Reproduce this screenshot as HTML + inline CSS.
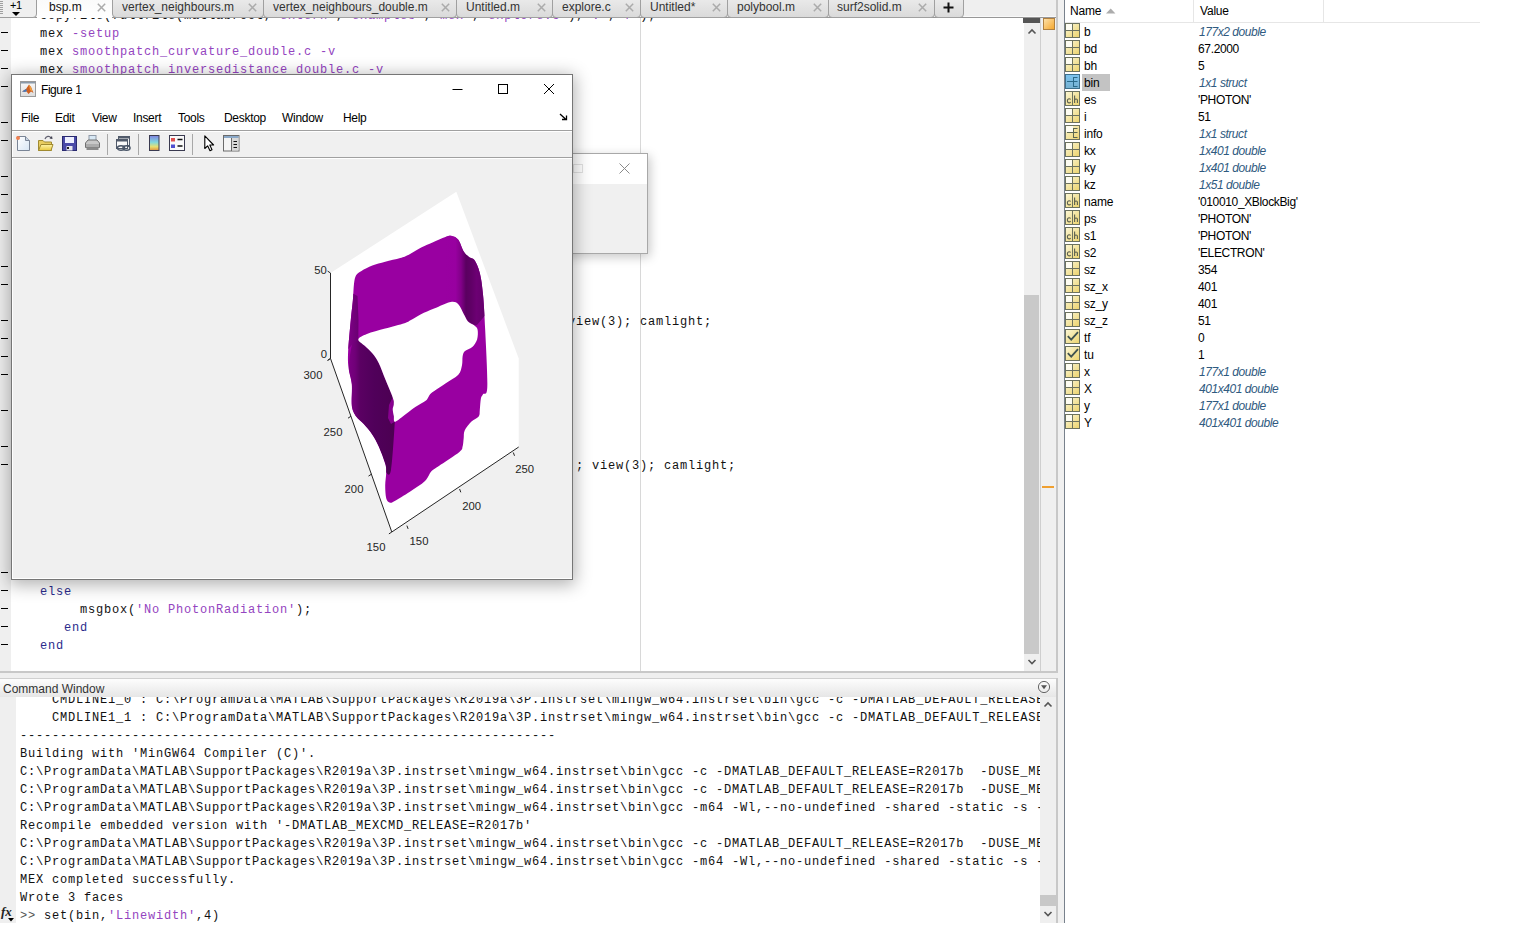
<!DOCTYPE html><html><head><meta charset="utf-8"><style>

*{margin:0;padding:0;box-sizing:border-box}
html,body{width:1522px;height:930px;overflow:hidden;background:#fff;font-family:"Liberation Sans",sans-serif;font-size:12px;color:#000}
.a{position:absolute}
.m{position:absolute;font-family:"Liberation Mono",monospace;font-size:12px;letter-spacing:0.8px;white-space:pre;line-height:18px;height:18px;color:#111}
.s{color:#9444c0}
.k{color:#2b2b8c}
.u{position:absolute;font-family:"Liberation Sans",sans-serif;font-size:12px;white-space:pre;line-height:17px}
.dash{position:absolute;left:1px;width:7px;height:1px;background:#000}

</style></head><body>
<div class="a" style="left:0;top:17px;width:1058px;height:656px;background:#fff;overflow:hidden">
<div class="a" style="left:0;top:0;width:11px;height:654px;background:#efefef"></div>
<div class="a" style="left:640px;top:0;width:1px;height:654px;background:#d8d8d8"></div>
<div class="dash" style="top:15px"></div>
<div class="dash" style="top:33px"></div>
<div class="dash" style="top:51px"></div>
<div class="dash" style="top:69px"></div>
<div class="dash" style="top:105px"></div>
<div class="dash" style="top:123px"></div>
<div class="dash" style="top:159px"></div>
<div class="dash" style="top:177px"></div>
<div class="dash" style="top:195px"></div>
<div class="dash" style="top:213px"></div>
<div class="dash" style="top:249px"></div>
<div class="dash" style="top:267px"></div>
<div class="dash" style="top:303px"></div>
<div class="dash" style="top:321px"></div>
<div class="dash" style="top:339px"></div>
<div class="dash" style="top:357px"></div>
<div class="dash" style="top:393px"></div>
<div class="dash" style="top:429px"></div>
<div class="dash" style="top:447px"></div>
<div class="dash" style="top:555px"></div>
<div class="dash" style="top:573px"></div>
<div class="dash" style="top:591px"></div>
<div class="dash" style="top:609px"></div>
<div class="dash" style="top:627px"></div>
<div class="m" style="left:40px;top:-10px">copyfile(fullfile(matlabroot,<span class=s>'extern'</span>,<span class=s>'examples'</span>,<span class=s>'mex'</span>,<span class=s>'explore.c'</span>),<span class=s>'.'</span>,<span class=s>'f'</span>);</div>
<div class="m" style="left:40px;top:8px">mex <span class=s>-setup</span></div>
<div class="m" style="left:40px;top:26px">mex <span class=s>smoothpatch_curvature_double.c -v</span></div>
<div class="m" style="left:40px;top:44px">mex <span class=s>smoothpatch_inversedistance_double.c -v</span></div>
<div class="m" style="left:568px;top:296px">view(3); camlight;</div>
<div class="m" style="left:576px;top:440px">; view(3); camlight;</div>
<div class="m" style="left:40px;top:566px"><span class=k>else</span></div>
<div class="m" style="left:80px;top:584px">msgbox(<span class=s>'No PhotonRadiation'</span>);</div>
<div class="m" style="left:64px;top:602px"><span class=k>end</span></div>
<div class="m" style="left:40px;top:620px"><span class=k>end</span></div>
<div class="a" style="left:1024px;top:0;width:16px;height:654px;background:#efefef"></div>
<div class="a" style="left:1023px;top:1px;width:17px;height:5px;background:#555"></div>
<div class="a" style="left:1024px;top:278px;width:15px;height:359px;background:#c9c9c9"></div>
<svg class="a" style="left:1024px;top:7px" width="16" height="14"><path d="M4.5 9.5 L8 6 L11.5 9.5" fill="none" stroke="#555" stroke-width="1.6"/></svg>
<svg class="a" style="left:1024px;top:637px" width="16" height="17"><path d="M4.5 6 L8 9.5 L11.5 6" fill="none" stroke="#555" stroke-width="1.6"/></svg>
<div class="a" style="left:1040px;top:0;width:1px;height:654px;background:#cfcfcf"></div>
<div class="a" style="left:1041px;top:0;width:15px;height:654px;background:#f0f0f0"></div>
<div class="a" style="left:1043px;top:1px;width:12px;height:12px;background:linear-gradient(135deg,#fde0a8,#f5a830);border:1px solid #b08040"></div>
<div class="a" style="left:1042px;top:469px;width:12px;height:2px;background:#f0a030"></div>
<div class="a" style="left:1056px;top:0;width:2px;height:656px;background:#c8c8c8"></div>
<div class="a" style="left:0;top:654px;width:1057px;height:2px;background:#c8c8c8"></div>
</div>
<div class="a" style="left:0;top:0;width:1058px;height:18px;background:#efefef;overflow:hidden">
<div class="a" style="left:0;top:16px;width:1057px;height:1px;background:#f8f8f8"></div>
<div class="a" style="left:0;top:17px;width:1057px;height:1px;background:#979797"></div>
<div class="a" style="left:-4px;top:-4px;width:41px;height:22px;background:#efefef;border:1px solid #9d9d9d;border-radius:0 0 4px 0"></div>
<div class="a" style="left:0;top:1px;width:3px;height:1px;background:#a0a0a0"></div>
<div class="a" style="left:0;top:3px;width:3px;height:1px;background:#a0a0a0"></div>
<div class="a" style="left:0;top:5px;width:3px;height:1px;background:#a0a0a0"></div>
<div class="a" style="left:0;top:7px;width:3px;height:1px;background:#a0a0a0"></div>
<div class="a" style="left:0;top:9px;width:3px;height:1px;background:#a0a0a0"></div>
<div class="a" style="left:0;top:11px;width:3px;height:1px;background:#a0a0a0"></div>
<div class="a" style="left:0;top:13px;width:3px;height:1px;background:#a0a0a0"></div>
<div class="a" style="left:10px;top:0px;font-size:11px;line-height:11px;font-family:'Liberation Sans';color:#000;letter-spacing:-0.5px">+1</div>
<svg class="a" style="left:11px;top:11px" width="10" height="6"><path d="M1 1 L9 1 L5 5 Z" fill="#000"/></svg>
<div class="a" style="left:37px;top:-1px;width:75px;height:19px;background:linear-gradient(#fafafa,#fff)"></div>
<div class="u" style="left:49px;top:-1px;color:#111;font-size:12px">bsp.m</div>
<svg class="a" style="left:96.5px;top:3px" width="9" height="9"><path d="M0.8 0.8 L8.2 8.2 M8.2 0.8 L0.8 8.2" stroke="#ababab" stroke-width="1.5"/></svg>
<div class="a" style="left:112px;top:-4px;width:152px;height:22px;background:linear-gradient(#ececec,#dadada);border:1px solid #a0a0a0;border-radius:0 0 4px 4px"></div>
<div class="u" style="left:122px;top:-1px;color:#333;font-size:12px">vertex_neighbours.m</div>
<svg class="a" style="left:247.5px;top:3px" width="9" height="9"><path d="M0.8 0.8 L8.2 8.2 M8.2 0.8 L0.8 8.2" stroke="#ababab" stroke-width="1.5"/></svg>
<div class="a" style="left:263px;top:-4px;width:194px;height:22px;background:linear-gradient(#ececec,#dadada);border:1px solid #a0a0a0;border-radius:0 0 4px 4px"></div>
<div class="u" style="left:273px;top:-1px;color:#333;font-size:12px">vertex_neighbours_double.m</div>
<svg class="a" style="left:441px;top:3px" width="9" height="9"><path d="M0.8 0.8 L8.2 8.2 M8.2 0.8 L0.8 8.2" stroke="#ababab" stroke-width="1.5"/></svg>
<div class="a" style="left:456px;top:-4px;width:97px;height:22px;background:linear-gradient(#ececec,#dadada);border:1px solid #a0a0a0;border-radius:0 0 4px 4px"></div>
<div class="u" style="left:466px;top:-1px;color:#333;font-size:12px">Untitled.m</div>
<svg class="a" style="left:537px;top:3px" width="9" height="9"><path d="M0.8 0.8 L8.2 8.2 M8.2 0.8 L0.8 8.2" stroke="#ababab" stroke-width="1.5"/></svg>
<div class="a" style="left:552px;top:-4px;width:89px;height:22px;background:linear-gradient(#ececec,#dadada);border:1px solid #a0a0a0;border-radius:0 0 4px 4px"></div>
<div class="u" style="left:562px;top:-1px;color:#333;font-size:12px">explore.c</div>
<svg class="a" style="left:625px;top:3px" width="9" height="9"><path d="M0.8 0.8 L8.2 8.2 M8.2 0.8 L0.8 8.2" stroke="#ababab" stroke-width="1.5"/></svg>
<div class="a" style="left:640px;top:-4px;width:88px;height:22px;background:linear-gradient(#ececec,#dadada);border:1px solid #a0a0a0;border-radius:0 0 4px 4px"></div>
<div class="u" style="left:650px;top:-1px;color:#333;font-size:12px">Untitled*</div>
<svg class="a" style="left:711.5px;top:3px" width="9" height="9"><path d="M0.8 0.8 L8.2 8.2 M8.2 0.8 L0.8 8.2" stroke="#ababab" stroke-width="1.5"/></svg>
<div class="a" style="left:727px;top:-4px;width:102px;height:22px;background:linear-gradient(#ececec,#dadada);border:1px solid #a0a0a0;border-radius:0 0 4px 4px"></div>
<div class="u" style="left:737px;top:-1px;color:#333;font-size:12px">polybool.m</div>
<svg class="a" style="left:812.5px;top:3px" width="9" height="9"><path d="M0.8 0.8 L8.2 8.2 M8.2 0.8 L0.8 8.2" stroke="#ababab" stroke-width="1.5"/></svg>
<div class="a" style="left:828px;top:-4px;width:107px;height:22px;background:linear-gradient(#ececec,#dadada);border:1px solid #a0a0a0;border-radius:0 0 4px 4px"></div>
<div class="u" style="left:837px;top:-1px;color:#333;font-size:12px">surf2solid.m</div>
<svg class="a" style="left:917.5px;top:3px" width="9" height="9"><path d="M0.8 0.8 L8.2 8.2 M8.2 0.8 L0.8 8.2" stroke="#ababab" stroke-width="1.5"/></svg>
<div class="a" style="left:934px;top:-4px;width:30px;height:22px;background:linear-gradient(#ececec,#dadada);border:1px solid #a0a0a0;border-radius:0 0 4px 4px"></div>
<svg class="a" style="left:943px;top:2px" width="11" height="11"><path d="M5.5 0.5 V10.5 M0.5 5.5 H10.5" stroke="#111" stroke-width="2"/></svg>
<div class="a" style="left:1056px;top:0;width:2px;height:18px;background:#c8c8c8"></div>
</div>
<div class="a" style="left:0;top:673px;width:1058px;height:5px;background:#efefef"></div>
<div class="a" style="left:0;top:678px;width:1058px;height:245px;background:#fff;overflow:hidden">
<div class="a" style="left:0;top:0;width:1057px;height:1px;background:#d0d0d0"></div>
<div class="a" style="left:0;top:19px;width:16px;height:226px;background:#efefef"></div>
<div class="m" style="left:52px;top:13px">CMDLINE1_0 : C:\ProgramData\MATLAB\SupportPackages\R2019a\3P.instrset\mingw_w64.instrset\bin\gcc -c -DMATLAB_DEFAULT_RELEASE=R2017b  -DUSE_MEX_CMD</div>
<div class="m" style="left:52px;top:31px">CMDLINE1_1 : C:\ProgramData\MATLAB\SupportPackages\R2019a\3P.instrset\mingw_w64.instrset\bin\gcc -c -DMATLAB_DEFAULT_RELEASE=R2017b  -DUSE_MEX_CMD</div>
<div class="m" style="left:20px;top:49px">-------------------------------------------------------------------</div>
<div class="m" style="left:20px;top:67px">Building with 'MinGW64 Compiler (C)'.</div>
<div class="m" style="left:20px;top:85px">C:\ProgramData\MATLAB\SupportPackages\R2019a\3P.instrset\mingw_w64.instrset\bin\gcc -c -DMATLAB_DEFAULT_RELEASE=R2017b  -DUSE_MEX_CMD</div>
<div class="m" style="left:20px;top:103px">C:\ProgramData\MATLAB\SupportPackages\R2019a\3P.instrset\mingw_w64.instrset\bin\gcc -c -DMATLAB_DEFAULT_RELEASE=R2017b  -DUSE_MEX_CMD</div>
<div class="m" style="left:20px;top:121px">C:\ProgramData\MATLAB\SupportPackages\R2019a\3P.instrset\mingw_w64.instrset\bin\gcc -m64 -Wl,--no-undefined -shared -static -s -Wl</div>
<div class="m" style="left:20px;top:139px">Recompile embedded version with '-DMATLAB_MEXCMD_RELEASE=R2017b'</div>
<div class="m" style="left:20px;top:157px">C:\ProgramData\MATLAB\SupportPackages\R2019a\3P.instrset\mingw_w64.instrset\bin\gcc -c -DMATLAB_DEFAULT_RELEASE=R2017b  -DUSE_MEX_CMD</div>
<div class="m" style="left:20px;top:175px">C:\ProgramData\MATLAB\SupportPackages\R2019a\3P.instrset\mingw_w64.instrset\bin\gcc -m64 -Wl,--no-undefined -shared -static -s -Wl</div>
<div class="m" style="left:20px;top:193px">MEX completed successfully.</div>
<div class="m" style="left:20px;top:211px">Wrote 3 faces</div>
<div class="m" style="left:20px;top:229px"><span style='color:#555'>&gt;&gt;</span> set(bin,<span class=s>'Linewidth'</span>,4)</div>
<div class="a" style="left:0;top:1px;width:1057px;height:18px;background:linear-gradient(#fdfdfd,#e6e6e6)"></div>
<div class="u" style="left:3px;top:2.5px;color:#333;font-size:12px">Command Window</div>
<svg class="a" style="left:1037px;top:2px" width="14" height="14"><circle cx="7" cy="7" r="5.6" fill="none" stroke="#666" stroke-width="1"/><path d="M4 5.2 H10 L7 9.2 Z" fill="#555"/></svg>
<div class="a" style="left:1040px;top:19px;width:16px;height:226px;background:#efefef"></div>
<div class="a" style="left:1040px;top:217px;width:16px;height:11px;background:#c8c8c8"></div>
<svg class="a" style="left:1040px;top:19px" width="16" height="14"><path d="M4.5 9.5 L8 6 L11.5 9.5" fill="none" stroke="#555" stroke-width="1.6"/></svg>
<svg class="a" style="left:1040px;top:228px" width="16" height="17"><path d="M4.5 6 L8 9.5 L11.5 6" fill="none" stroke="#555" stroke-width="1.6"/></svg>
<div class="a" style="left:1056px;top:0;width:2px;height:245px;background:#c8c8c8"></div>
<div class="a" style="left:1px;top:227px;font-family:'Liberation Serif';font-style:italic;font-weight:bold;font-size:13px;line-height:14px;color:#222">fx</div>
<svg class="a" style="left:8px;top:240px" width="6" height="4"><path d="M0 0 H6 L3 3.5 Z" fill="#000"/></svg>
</div>
<div class="a" style="left:1058px;top:0;width:6px;height:923px;background:#f0f0f0"></div>
<div class="a" style="left:1064px;top:0;width:1px;height:923px;background:#78818c"></div>
<div class="a" style="left:1065px;top:0;width:457px;height:923px;background:#fff;overflow:hidden">
<div class="u" style="left:5px;top:3px;color:#000;letter-spacing:-0.2px">Name</div>
<svg class="a" style="left:41px;top:8px" width="10" height="6"><path d="M0 5.5 L4.7 0.5 L9.4 5.5 Z" fill="#acacac"/></svg>
<div class="u" style="left:135px;top:3px;color:#000;letter-spacing:-0.2px">Value</div>
<div class="a" style="left:128px;top:0;width:1px;height:22px;background:#e6e6e6"></div>
<div class="a" style="left:258px;top:0;width:1px;height:22px;background:#e6e6e6"></div>
<div class="a" style="left:0;top:22px;width:415px;height:1px;background:#e6e6e6"></div>
<svg width="0" height="0" style="position:absolute"><defs>
<linearGradient id="gy" x1="0" y1="0" x2="1" y2="1"><stop offset="0" stop-color="#fbf7d8"/><stop offset="1" stop-color="#ecd36c"/></linearGradient>
<linearGradient id="gb" x1="0" y1="0" x2="0" y2="1"><stop offset="0" stop-color="#7ec4f0"/><stop offset="1" stop-color="#74b0d0"/></linearGradient>
</defs></svg>
<svg class="a" style="left:0;top:23px" width="15" height="15"><rect x="0.5" y="0.5" width="14" height="14" fill="url(#gy)" stroke="#6c725f"/><rect x="1" y="1" width="6" height="6" fill="#fdfcf2"/><path d="M7.5 0.5 V14.5 M0.5 7.5 H14.5" stroke="#6c725f"/></svg>
<div class="u" style="left:19px;top:24px;letter-spacing:-0.2px">b</div>
<div class="u" style="left:134px;top:24px;font-style:italic;color:#2f5a80;letter-spacing:-0.45px">177x2 double</div>
<svg class="a" style="left:0;top:40px" width="15" height="15"><rect x="0.5" y="0.5" width="14" height="14" fill="url(#gy)" stroke="#6c725f"/><rect x="1" y="1" width="6" height="6" fill="#fdfcf2"/><path d="M7.5 0.5 V14.5 M0.5 7.5 H14.5" stroke="#6c725f"/></svg>
<div class="u" style="left:19px;top:41px;letter-spacing:-0.2px">bd</div>
<div class="u" style="left:133px;top:41px;letter-spacing:-0.35px">67.2000</div>
<svg class="a" style="left:0;top:57px" width="15" height="15"><rect x="0.5" y="0.5" width="14" height="14" fill="url(#gy)" stroke="#6c725f"/><rect x="1" y="1" width="6" height="6" fill="#fdfcf2"/><path d="M7.5 0.5 V14.5 M0.5 7.5 H14.5" stroke="#6c725f"/></svg>
<div class="u" style="left:19px;top:58px;letter-spacing:-0.2px">bh</div>
<div class="u" style="left:133px;top:58px;letter-spacing:-0.35px">5</div>
<div class="a" style="left:17px;top:74px;width:28px;height:17px;background:#c3c3c3"></div>
<svg class="a" style="left:0;top:74px" width="15" height="15"><rect x="0.5" y="0.5" width="14" height="14" fill="url(#gb)" stroke="#3d6f8c"/><path d="M2 7.5 H8.5 M8.5 3.5 V12.5 M8 3.5 H12.5 M8.5 7.5 H12.5 M8 12.5 H12.5" fill="none" stroke="#2a6a8a" stroke-width="1"/></svg>
<div class="u" style="left:19px;top:75px;letter-spacing:-0.2px">bin</div>
<div class="u" style="left:134px;top:75px;font-style:italic;color:#2f5a80;letter-spacing:-0.45px">1x1 struct</div>
<svg class="a" style="left:0;top:91px" width="15" height="15"><rect x="0.5" y="0.5" width="14" height="14" fill="url(#gy)" stroke="#6c725f"/><path d="M7.5 0.5 V14.5" stroke="#6c725f"/><path d="M5.6 8.6 C5.3 8 4.7 7.7 4.1 7.7 C3.1 7.7 2.4 8.6 2.4 9.8 C2.4 11 3.1 11.9 4.1 11.9 C4.7 11.9 5.3 11.6 5.6 11" fill="none" stroke="#5e6250" stroke-width="1.1"/><path d="M9.6 4.5 V12 M9.6 9 C10 7.8 12.4 7.6 12.4 9.2 V12" fill="none" stroke="#5e6250" stroke-width="1.1"/></svg>
<div class="u" style="left:19px;top:92px;letter-spacing:-0.2px">es</div>
<div class="u" style="left:133px;top:92px;letter-spacing:-0.35px">'PHOTON'</div>
<svg class="a" style="left:0;top:108px" width="15" height="15"><rect x="0.5" y="0.5" width="14" height="14" fill="url(#gy)" stroke="#6c725f"/><rect x="1" y="1" width="6" height="6" fill="#fdfcf2"/><path d="M7.5 0.5 V14.5 M0.5 7.5 H14.5" stroke="#6c725f"/></svg>
<div class="u" style="left:19px;top:109px;letter-spacing:-0.2px">i</div>
<div class="u" style="left:133px;top:109px;letter-spacing:-0.35px">51</div>
<svg class="a" style="left:0;top:125px" width="15" height="15"><rect x="0.5" y="0.5" width="14" height="14" fill="url(#gy)" stroke="#6c725f"/><rect x="1" y="1" width="7" height="6" fill="#fdfcf2"/><path d="M2 7.5 H8.5 M8.5 3.5 V12.5 M8 3.5 H12.5 M8.5 7.5 H12.5 M8 12.5 H12.5" fill="none" stroke="#5a6650" stroke-width="1"/></svg>
<div class="u" style="left:19px;top:126px;letter-spacing:-0.2px">info</div>
<div class="u" style="left:134px;top:126px;font-style:italic;color:#2f5a80;letter-spacing:-0.45px">1x1 struct</div>
<svg class="a" style="left:0;top:142px" width="15" height="15"><rect x="0.5" y="0.5" width="14" height="14" fill="url(#gy)" stroke="#6c725f"/><rect x="1" y="1" width="6" height="6" fill="#fdfcf2"/><path d="M7.5 0.5 V14.5 M0.5 7.5 H14.5" stroke="#6c725f"/></svg>
<div class="u" style="left:19px;top:143px;letter-spacing:-0.2px">kx</div>
<div class="u" style="left:134px;top:143px;font-style:italic;color:#2f5a80;letter-spacing:-0.45px">1x401 double</div>
<svg class="a" style="left:0;top:159px" width="15" height="15"><rect x="0.5" y="0.5" width="14" height="14" fill="url(#gy)" stroke="#6c725f"/><rect x="1" y="1" width="6" height="6" fill="#fdfcf2"/><path d="M7.5 0.5 V14.5 M0.5 7.5 H14.5" stroke="#6c725f"/></svg>
<div class="u" style="left:19px;top:160px;letter-spacing:-0.2px">ky</div>
<div class="u" style="left:134px;top:160px;font-style:italic;color:#2f5a80;letter-spacing:-0.45px">1x401 double</div>
<svg class="a" style="left:0;top:176px" width="15" height="15"><rect x="0.5" y="0.5" width="14" height="14" fill="url(#gy)" stroke="#6c725f"/><rect x="1" y="1" width="6" height="6" fill="#fdfcf2"/><path d="M7.5 0.5 V14.5 M0.5 7.5 H14.5" stroke="#6c725f"/></svg>
<div class="u" style="left:19px;top:177px;letter-spacing:-0.2px">kz</div>
<div class="u" style="left:134px;top:177px;font-style:italic;color:#2f5a80;letter-spacing:-0.45px">1x51 double</div>
<svg class="a" style="left:0;top:193px" width="15" height="15"><rect x="0.5" y="0.5" width="14" height="14" fill="url(#gy)" stroke="#6c725f"/><path d="M7.5 0.5 V14.5" stroke="#6c725f"/><path d="M5.6 8.6 C5.3 8 4.7 7.7 4.1 7.7 C3.1 7.7 2.4 8.6 2.4 9.8 C2.4 11 3.1 11.9 4.1 11.9 C4.7 11.9 5.3 11.6 5.6 11" fill="none" stroke="#5e6250" stroke-width="1.1"/><path d="M9.6 4.5 V12 M9.6 9 C10 7.8 12.4 7.6 12.4 9.2 V12" fill="none" stroke="#5e6250" stroke-width="1.1"/></svg>
<div class="u" style="left:19px;top:194px;letter-spacing:-0.2px">name</div>
<div class="u" style="left:133px;top:194px;letter-spacing:-0.35px">'010010_XBlockBig'</div>
<svg class="a" style="left:0;top:210px" width="15" height="15"><rect x="0.5" y="0.5" width="14" height="14" fill="url(#gy)" stroke="#6c725f"/><path d="M7.5 0.5 V14.5" stroke="#6c725f"/><path d="M5.6 8.6 C5.3 8 4.7 7.7 4.1 7.7 C3.1 7.7 2.4 8.6 2.4 9.8 C2.4 11 3.1 11.9 4.1 11.9 C4.7 11.9 5.3 11.6 5.6 11" fill="none" stroke="#5e6250" stroke-width="1.1"/><path d="M9.6 4.5 V12 M9.6 9 C10 7.8 12.4 7.6 12.4 9.2 V12" fill="none" stroke="#5e6250" stroke-width="1.1"/></svg>
<div class="u" style="left:19px;top:211px;letter-spacing:-0.2px">ps</div>
<div class="u" style="left:133px;top:211px;letter-spacing:-0.35px">'PHOTON'</div>
<svg class="a" style="left:0;top:227px" width="15" height="15"><rect x="0.5" y="0.5" width="14" height="14" fill="url(#gy)" stroke="#6c725f"/><path d="M7.5 0.5 V14.5" stroke="#6c725f"/><path d="M5.6 8.6 C5.3 8 4.7 7.7 4.1 7.7 C3.1 7.7 2.4 8.6 2.4 9.8 C2.4 11 3.1 11.9 4.1 11.9 C4.7 11.9 5.3 11.6 5.6 11" fill="none" stroke="#5e6250" stroke-width="1.1"/><path d="M9.6 4.5 V12 M9.6 9 C10 7.8 12.4 7.6 12.4 9.2 V12" fill="none" stroke="#5e6250" stroke-width="1.1"/></svg>
<div class="u" style="left:19px;top:228px;letter-spacing:-0.2px">s1</div>
<div class="u" style="left:133px;top:228px;letter-spacing:-0.35px">'PHOTON'</div>
<svg class="a" style="left:0;top:244px" width="15" height="15"><rect x="0.5" y="0.5" width="14" height="14" fill="url(#gy)" stroke="#6c725f"/><path d="M7.5 0.5 V14.5" stroke="#6c725f"/><path d="M5.6 8.6 C5.3 8 4.7 7.7 4.1 7.7 C3.1 7.7 2.4 8.6 2.4 9.8 C2.4 11 3.1 11.9 4.1 11.9 C4.7 11.9 5.3 11.6 5.6 11" fill="none" stroke="#5e6250" stroke-width="1.1"/><path d="M9.6 4.5 V12 M9.6 9 C10 7.8 12.4 7.6 12.4 9.2 V12" fill="none" stroke="#5e6250" stroke-width="1.1"/></svg>
<div class="u" style="left:19px;top:245px;letter-spacing:-0.2px">s2</div>
<div class="u" style="left:133px;top:245px;letter-spacing:-0.35px">'ELECTRON'</div>
<svg class="a" style="left:0;top:261px" width="15" height="15"><rect x="0.5" y="0.5" width="14" height="14" fill="url(#gy)" stroke="#6c725f"/><rect x="1" y="1" width="6" height="6" fill="#fdfcf2"/><path d="M7.5 0.5 V14.5 M0.5 7.5 H14.5" stroke="#6c725f"/></svg>
<div class="u" style="left:19px;top:262px;letter-spacing:-0.2px">sz</div>
<div class="u" style="left:133px;top:262px;letter-spacing:-0.35px">354</div>
<svg class="a" style="left:0;top:278px" width="15" height="15"><rect x="0.5" y="0.5" width="14" height="14" fill="url(#gy)" stroke="#6c725f"/><rect x="1" y="1" width="6" height="6" fill="#fdfcf2"/><path d="M7.5 0.5 V14.5 M0.5 7.5 H14.5" stroke="#6c725f"/></svg>
<div class="u" style="left:19px;top:279px;letter-spacing:-0.2px">sz_x</div>
<div class="u" style="left:133px;top:279px;letter-spacing:-0.35px">401</div>
<svg class="a" style="left:0;top:295px" width="15" height="15"><rect x="0.5" y="0.5" width="14" height="14" fill="url(#gy)" stroke="#6c725f"/><rect x="1" y="1" width="6" height="6" fill="#fdfcf2"/><path d="M7.5 0.5 V14.5 M0.5 7.5 H14.5" stroke="#6c725f"/></svg>
<div class="u" style="left:19px;top:296px;letter-spacing:-0.2px">sz_y</div>
<div class="u" style="left:133px;top:296px;letter-spacing:-0.35px">401</div>
<svg class="a" style="left:0;top:312px" width="15" height="15"><rect x="0.5" y="0.5" width="14" height="14" fill="url(#gy)" stroke="#6c725f"/><rect x="1" y="1" width="6" height="6" fill="#fdfcf2"/><path d="M7.5 0.5 V14.5 M0.5 7.5 H14.5" stroke="#6c725f"/></svg>
<div class="u" style="left:19px;top:313px;letter-spacing:-0.2px">sz_z</div>
<div class="u" style="left:133px;top:313px;letter-spacing:-0.35px">51</div>
<svg class="a" style="left:0;top:329px" width="15" height="15"><rect x="0.5" y="0.5" width="14" height="14" fill="url(#gy)" stroke="#6c725f"/><path d="M2.8 7.2 L6.2 10.6 L13 3.2" fill="none" stroke="#3f5250" stroke-width="1.8"/></svg>
<div class="u" style="left:19px;top:330px;letter-spacing:-0.2px">tf</div>
<div class="u" style="left:133px;top:330px;letter-spacing:-0.35px">0</div>
<svg class="a" style="left:0;top:346px" width="15" height="15"><rect x="0.5" y="0.5" width="14" height="14" fill="url(#gy)" stroke="#6c725f"/><path d="M2.8 7.2 L6.2 10.6 L13 3.2" fill="none" stroke="#3f5250" stroke-width="1.8"/></svg>
<div class="u" style="left:19px;top:347px;letter-spacing:-0.2px">tu</div>
<div class="u" style="left:133px;top:347px;letter-spacing:-0.35px">1</div>
<svg class="a" style="left:0;top:363px" width="15" height="15"><rect x="0.5" y="0.5" width="14" height="14" fill="url(#gy)" stroke="#6c725f"/><rect x="1" y="1" width="6" height="6" fill="#fdfcf2"/><path d="M7.5 0.5 V14.5 M0.5 7.5 H14.5" stroke="#6c725f"/></svg>
<div class="u" style="left:19px;top:364px;letter-spacing:-0.2px">x</div>
<div class="u" style="left:134px;top:364px;font-style:italic;color:#2f5a80;letter-spacing:-0.45px">177x1 double</div>
<svg class="a" style="left:0;top:380px" width="15" height="15"><rect x="0.5" y="0.5" width="14" height="14" fill="url(#gy)" stroke="#6c725f"/><rect x="1" y="1" width="6" height="6" fill="#fdfcf2"/><path d="M7.5 0.5 V14.5 M0.5 7.5 H14.5" stroke="#6c725f"/></svg>
<div class="u" style="left:19px;top:381px;letter-spacing:-0.2px">X</div>
<div class="u" style="left:134px;top:381px;font-style:italic;color:#2f5a80;letter-spacing:-0.45px">401x401 double</div>
<svg class="a" style="left:0;top:397px" width="15" height="15"><rect x="0.5" y="0.5" width="14" height="14" fill="url(#gy)" stroke="#6c725f"/><rect x="1" y="1" width="6" height="6" fill="#fdfcf2"/><path d="M7.5 0.5 V14.5 M0.5 7.5 H14.5" stroke="#6c725f"/></svg>
<div class="u" style="left:19px;top:398px;letter-spacing:-0.2px">y</div>
<div class="u" style="left:134px;top:398px;font-style:italic;color:#2f5a80;letter-spacing:-0.45px">177x1 double</div>
<svg class="a" style="left:0;top:414px" width="15" height="15"><rect x="0.5" y="0.5" width="14" height="14" fill="url(#gy)" stroke="#6c725f"/><rect x="1" y="1" width="6" height="6" fill="#fdfcf2"/><path d="M7.5 0.5 V14.5 M0.5 7.5 H14.5" stroke="#6c725f"/></svg>
<div class="u" style="left:19px;top:415px;letter-spacing:-0.2px">Y</div>
<div class="u" style="left:134px;top:415px;font-style:italic;color:#2f5a80;letter-spacing:-0.45px">401x401 double</div>
</div>
<div class="a" style="left:540px;top:153px;width:108px;height:101px;background:#f0f0f0;border:1px solid #a8a8a8;box-shadow:2px 3px 10px rgba(0,0,0,.22)">
<div class="a" style="left:0;top:0;width:106px;height:30px;background:#fff"></div>
<svg class="a" style="left:78px;top:9px" width="11" height="11"><path d="M0.5 0.5 L10.5 10.5 M10.5 0.5 L0.5 10.5" stroke="#8a8a8a" stroke-width="1"/></svg>
<div class="a" style="left:32px;top:10px;width:10px;height:9px;border:1px solid #e2e2e2"></div>
</div>
<div class="a" style="left:11px;top:74px;width:562px;height:506px;background:#f0f0f0;border:1px solid #767676;box-shadow:0 3px 16px 2px rgba(0,0,0,.30)">
<div class="a" style="left:0;top:0;width:1px;height:504px;background:#fff"></div>
<div class="a" style="left:0;top:503px;width:560px;height:1px;background:#fff"></div>
<div class="a" style="left:0;top:0;width:560px;height:55px;background:#fff"></div>
<div class="a" style="left:0;top:55px;width:560px;height:1px;background:#a0a0a0"></div>
<div class="a" style="left:0;top:56px;width:560px;height:1px;background:#fff"></div>
<div class="a" style="left:0;top:82px;width:560px;height:1px;background:#a0a0a0"></div>
<div class="a" style="left:0;top:83px;width:560px;height:1px;background:#fff"></div>
<svg class="a" style="left:8px;top:6px" width="16" height="16">
<defs><linearGradient id="ti" x1="0" y1="0" x2="0" y2="1"><stop offset="0" stop-color="#fafafa"/><stop offset="1" stop-color="#dcdcdc"/></linearGradient></defs>
<rect x="0.5" y="0.5" width="15" height="15" fill="url(#ti)" stroke="#9a9a9a"/>
<rect x="1" y="1" width="14" height="1.5" fill="#8a9aaa"/>
<path d="M2 10.5 L6 8 L9 3.5 L11 6 L13.5 12 L11 10.5 L8.5 13 L6.5 10.5 Z" fill="#d06020"/>
<path d="M2 10.5 L6 8 L7 10 L5 11 Z" fill="#4a78b8"/>
<path d="M9 3.5 L11 6 L12.5 10.5 L10 9 Z" fill="#f0a040"/>
</svg>
<div class="u" style="left:29px;top:6.799999999999997px;font-size:12px;letter-spacing:-0.45px;color:#000">Figure 1</div>
<svg class="a" style="left:438px;top:7px" width="110" height="14"><path d="M2.5 7.5 H12.5" stroke="#000" stroke-width="1"/><rect x="48.5" y="2.5" width="9" height="9" fill="none" stroke="#000" stroke-width="1"/><path d="M94 2 L104 12 M104 2 L94 12" stroke="#000" stroke-width="1"/></svg>
<div class="u" style="left:9px;top:35px;letter-spacing:-0.3px">File</div>
<div class="u" style="left:43px;top:35px;letter-spacing:-0.3px">Edit</div>
<div class="u" style="left:80px;top:35px;letter-spacing:-0.3px">View</div>
<div class="u" style="left:121px;top:35px;letter-spacing:-0.3px">Insert</div>
<div class="u" style="left:166px;top:35px;letter-spacing:-0.3px">Tools</div>
<div class="u" style="left:212px;top:35px;letter-spacing:-0.3px">Desktop</div>
<div class="u" style="left:270px;top:35px;letter-spacing:-0.3px">Window</div>
<div class="u" style="left:331px;top:35px;letter-spacing:-0.3px">Help</div>
<svg class="a" style="left:547px;top:38px" width="9" height="8"><path d="M1 1 L7 6.5 M3 6.5 H7.5 V2.5" fill="none" stroke="#000" stroke-width="1.3"/></svg>
<div class="a" style="left:95px;top:59px;width:1px;height:21px;background:#a8a8a8"></div>
<div class="a" style="left:126px;top:59px;width:1px;height:21px;background:#a8a8a8"></div>
<div class="a" style="left:180px;top:59px;width:1px;height:21px;background:#a8a8a8"></div>
<svg class="a" style="left:3px;top:60px" width="17" height="17"><defs><linearGradient id="nw" x1="0" y1="0" x2="1" y2="1"><stop offset="0" stop-color="#fff"/><stop offset="1" stop-color="#d8e6f4"/></linearGradient></defs>
<path d="M2.5 1.5 H10.5 L14.5 5.5 V15.5 H2.5 Z" fill="url(#nw)" stroke="#7a8596"/>
<path d="M10.5 1.5 V5.5 H14.5" fill="#c8d4e2" stroke="#7a8596"/>
<circle cx="3" cy="3" r="2" fill="#f08050"/></svg>
<svg class="a" style="left:25px;top:60px" width="17" height="17"><defs><linearGradient id="op" x1="0" y1="0" x2="0" y2="1"><stop offset="0" stop-color="#fff4a8"/><stop offset="1" stop-color="#e8c840"/></linearGradient></defs>
<path d="M1.5 5.5 H6 L7.5 7 H14.5 V15.5 H1.5 Z" fill="#e8cc60" stroke="#a08a30"/>
<path d="M1.5 15.5 L4 9.5 H16 L14 15.5 Z" fill="url(#op)" stroke="#a08a30"/>
<path d="M8 4 C9 1 12.5 0.5 14 3" fill="none" stroke="#606070" stroke-width="1.2"/><path d="M12.5 3.5 L15.5 4 L15 1 Z" fill="#404050"/></svg>
<svg class="a" style="left:50px;top:61px" width="15" height="15"><rect x="0.5" y="0.5" width="14" height="14" fill="#4a4aa8" stroke="#2a2a70"/>
<rect x="3" y="1" width="9" height="6" fill="#eef0ff"/>
<rect x="4.5" y="10" width="6" height="4.5" fill="#e8e8f0"/><rect x="5" y="11" width="2" height="2" fill="#222"/></svg>
<svg class="a" style="left:73px;top:60px" width="15" height="16"><rect x="4" y="0.5" width="7" height="6" fill="#d8e8f4" stroke="#909aa8"/>
<path d="M0.5 8 L3 5 H12 L14.5 8 V12.5 H0.5 Z" fill="#c8c8c8" stroke="#707070"/>
<path d="M1 10 H14 M1 12 H14" stroke="#909090"/><rect x="1.5" y="12.5" width="12" height="2.5" fill="#8a8a8a"/></svg>
<svg class="a" style="left:103px;top:60px" width="17" height="17"><rect x="3.5" y="1.5" width="11" height="9" fill="#f4f4f4" stroke="#505a6a"/><rect x="3.5" y="1.5" width="11" height="2" fill="#505a6a"/>
<rect x="1.5" y="4.5" width="11" height="9" fill="#fafafa" stroke="#505a6a"/><rect x="1.5" y="4.5" width="11" height="2" fill="#505a6a"/>
<ellipse cx="6" cy="13" rx="3.6" ry="2.2" fill="none" stroke="#4a5668" stroke-width="1.4"/><ellipse cx="11.5" cy="13" rx="3.6" ry="2.2" fill="none" stroke="#4a5668" stroke-width="1.4"/></svg>
<svg class="a" style="left:137px;top:60px" width="11" height="16"><defs><linearGradient id="cb" x1="0" y1="0" x2="0" y2="1"><stop offset="0" stop-color="#8080e0"/><stop offset=".45" stop-color="#80d8e0"/><stop offset=".75" stop-color="#e8e070"/><stop offset="1" stop-color="#e09040"/></linearGradient></defs>
<rect x="0.5" y="0.5" width="9.5" height="15" fill="url(#cb)" stroke="#3a3a50"/></svg>
<svg class="a" style="left:157px;top:60px" width="16" height="16"><rect x="0.5" y="0.5" width="15" height="15" fill="#fafafa" stroke="#3a3a50"/>
<rect x="2" y="3" width="4" height="3.5" fill="#e05050"/><rect x="2" y="9.5" width="4" height="3.5" fill="#5050d0"/>
<path d="M8.5 4.5 H13.5 M8.5 11 H13.5" stroke="#111" stroke-width="1.3"/></svg>
<svg class="a" style="left:192px;top:60px" width="11" height="17"><path d="M0.8 0.8 V13.5 L3.6 10.8 L6 15.8 L8 14.8 L5.8 10 H9.6 Z" fill="#fff" stroke="#000" stroke-width="1.1" stroke-linejoin="round"/></svg>
<svg class="a" style="left:211px;top:60px" width="17" height="17"><rect x="0.5" y="0.5" width="15.5" height="15.5" fill="#f4f4f4" stroke="#6a6a6a"/>
<rect x="1" y="1" width="14.5" height="2" fill="#8aa8c8"/>
<rect x="9" y="3" width="6.5" height="12.5" fill="#d8d8d8"/><path d="M8.5 3 V16" stroke="#6a6a6a"/>
<path d="M10.5 6.5 H14 M10.5 9.5 H14 M10.5 12.5 H14" stroke="#111" stroke-width="1.2"/></svg>
<svg class="a" style="left:0;top:0;overflow:visible" width="560" height="503" viewBox="12 75 560 503">
<defs>
<linearGradient id="topband" x1="445" y1="0" x2="487" y2="0" gradientUnits="userSpaceOnUse">
<stop offset="0" stop-color="#9900a1"/><stop offset=".25" stop-color="#9800a0"/><stop offset=".38" stop-color="#820089"/><stop offset=".5" stop-color="#5a0060"/><stop offset=".62" stop-color="#600066"/><stop offset=".75" stop-color="#6c0073"/><stop offset="1" stop-color="#62006a"/></linearGradient>
<linearGradient id="lstrip" x1="348" y1="0" x2="359" y2="0" gradientUnits="userSpaceOnUse"><stop offset="0" stop-color="#800088"/><stop offset="1" stop-color="#680070"/></linearGradient>
<linearGradient id="lwall" x1="349" y1="0" x2="395" y2="0" gradientUnits="userSpaceOnUse">
<stop offset="0" stop-color="#7a0082"/><stop offset=".13" stop-color="#700078"/><stop offset=".25" stop-color="#5a0062"/><stop offset=".55" stop-color="#50005a"/><stop offset="1" stop-color="#4c0052"/></linearGradient>
</defs>
<path d="M330.5 273.0 L456.3 191.8 L518.7 358.5 L518.7 447.0 L391.8 532.0 L330.5 358.5 Z" fill="#fff"/>
<clipPath id="oc"><path d="M356.10 275.20 C357.35 273.05 358.80 272.52 361.50 270.90 C364.20 269.28 368.35 267.03 372.30 265.50 C376.25 263.97 380.55 262.95 385.20 261.70 C389.85 260.45 396.27 259.17 400.20 258.00 C404.13 256.83 405.22 256.50 408.80 254.70 C412.38 252.90 417.75 249.25 421.70 247.20 C425.65 245.15 428.55 244.10 432.50 242.40 C436.45 240.70 442.18 238.08 445.40 237.00 C448.62 235.92 449.65 235.45 451.80 235.90 C453.95 236.35 456.32 237.10 458.30 239.70 C460.28 242.30 461.92 248.63 463.70 251.50 C465.48 254.37 467.22 255.47 469.00 256.90 C470.78 258.33 472.60 257.42 474.40 260.10 C476.20 262.78 478.37 267.27 479.80 273.00 C481.23 278.73 482.10 285.00 483.00 294.50 C483.90 304.00 484.48 314.63 485.20 330.00 C485.92 345.37 487.67 376.00 487.30 386.70 C486.93 397.40 484.07 392.23 483.00 394.20 C481.93 396.17 481.43 395.87 480.90 398.50 C480.37 401.13 480.17 407.00 479.80 410.00 C479.43 413.00 480.13 414.53 478.70 416.50 C477.27 418.47 473.53 419.48 471.20 421.80 C468.87 424.12 465.95 427.70 464.70 430.40 C463.45 433.10 464.05 435.30 463.70 438.00 C463.35 440.70 463.32 444.28 462.60 446.60 C461.88 448.92 463.35 448.68 459.40 451.90 C455.45 455.12 443.57 462.67 438.90 465.90 C434.23 469.13 433.72 468.78 431.40 471.30 C429.08 473.82 428.58 477.60 425.00 481.00 C421.42 484.40 415.10 488.30 409.90 491.70 C404.70 495.10 397.20 499.60 393.80 501.40 C390.40 503.20 390.77 503.03 389.50 502.50 C388.23 501.97 386.92 501.07 386.20 498.20 C385.48 495.33 385.20 489.60 385.20 485.30 C385.20 481.00 386.20 475.98 386.20 472.40 C386.20 468.82 386.45 468.10 385.20 463.80 C383.95 459.50 380.85 451.45 378.70 446.60 C376.55 441.75 374.80 438.47 372.30 434.70 C369.80 430.93 366.40 427.03 363.70 424.00 C361.00 420.97 358.08 419.50 356.10 416.50 C354.12 413.50 352.52 411.33 351.80 406.00 C351.08 400.67 352.33 390.77 351.80 384.50 C351.27 378.23 349.22 373.77 348.60 368.40 C347.98 363.03 347.73 360.37 348.10 352.30 C348.47 344.23 350.00 328.73 350.80 320.00 C351.60 311.27 352.37 305.93 352.90 299.90 C353.43 293.87 353.47 287.92 354.00 283.80 C354.53 279.68 354.85 277.35 356.10 275.20 Z"/></clipPath>
<path d="M356.10 275.20 C357.35 273.05 358.80 272.52 361.50 270.90 C364.20 269.28 368.35 267.03 372.30 265.50 C376.25 263.97 380.55 262.95 385.20 261.70 C389.85 260.45 396.27 259.17 400.20 258.00 C404.13 256.83 405.22 256.50 408.80 254.70 C412.38 252.90 417.75 249.25 421.70 247.20 C425.65 245.15 428.55 244.10 432.50 242.40 C436.45 240.70 442.18 238.08 445.40 237.00 C448.62 235.92 449.65 235.45 451.80 235.90 C453.95 236.35 456.32 237.10 458.30 239.70 C460.28 242.30 461.92 248.63 463.70 251.50 C465.48 254.37 467.22 255.47 469.00 256.90 C470.78 258.33 472.60 257.42 474.40 260.10 C476.20 262.78 478.37 267.27 479.80 273.00 C481.23 278.73 482.10 285.00 483.00 294.50 C483.90 304.00 484.48 314.63 485.20 330.00 C485.92 345.37 487.67 376.00 487.30 386.70 C486.93 397.40 484.07 392.23 483.00 394.20 C481.93 396.17 481.43 395.87 480.90 398.50 C480.37 401.13 480.17 407.00 479.80 410.00 C479.43 413.00 480.13 414.53 478.70 416.50 C477.27 418.47 473.53 419.48 471.20 421.80 C468.87 424.12 465.95 427.70 464.70 430.40 C463.45 433.10 464.05 435.30 463.70 438.00 C463.35 440.70 463.32 444.28 462.60 446.60 C461.88 448.92 463.35 448.68 459.40 451.90 C455.45 455.12 443.57 462.67 438.90 465.90 C434.23 469.13 433.72 468.78 431.40 471.30 C429.08 473.82 428.58 477.60 425.00 481.00 C421.42 484.40 415.10 488.30 409.90 491.70 C404.70 495.10 397.20 499.60 393.80 501.40 C390.40 503.20 390.77 503.03 389.50 502.50 C388.23 501.97 386.92 501.07 386.20 498.20 C385.48 495.33 385.20 489.60 385.20 485.30 C385.20 481.00 386.20 475.98 386.20 472.40 C386.20 468.82 386.45 468.10 385.20 463.80 C383.95 459.50 380.85 451.45 378.70 446.60 C376.55 441.75 374.80 438.47 372.30 434.70 C369.80 430.93 366.40 427.03 363.70 424.00 C361.00 420.97 358.08 419.50 356.10 416.50 C354.12 413.50 352.52 411.33 351.80 406.00 C351.08 400.67 352.33 390.77 351.80 384.50 C351.27 378.23 349.22 373.77 348.60 368.40 C347.98 363.03 347.73 360.37 348.10 352.30 C348.47 344.23 350.00 328.73 350.80 320.00 C351.60 311.27 352.37 305.93 352.90 299.90 C353.43 293.87 353.47 287.92 354.00 283.80 C354.53 279.68 354.85 277.35 356.10 275.20 Z" fill="#9900a1"/>
<path d="M445.4 230.0 L455.0 228.0 L462.0 236.0 L468.0 250.0 L476.0 254.0 L484.0 270.0 L488.0 294.5 L488.0 312.0 L477.0 325.0 L474.4 325.4 L468.0 321.4 L463.7 313.9 L458.3 304.2 L450.8 302.0 L445.0 304.0 Z" fill="url(#topband)" clip-path="url(#oc)"/>
<path d="M358.30 339.40 C360.42 339.53 362.37 343.48 364.70 345.80 C367.03 348.12 369.97 350.43 372.30 353.30 C374.63 356.17 376.55 358.70 378.70 363.00 C380.85 367.30 382.87 373.37 385.20 379.10 C387.53 384.83 391.27 393.27 392.70 397.40 C394.13 401.53 393.80 401.93 393.80 403.90 C393.80 405.87 392.70 407.18 392.70 409.20 C392.70 411.22 393.45 413.90 393.80 416.00 C394.15 418.10 395.27 412.80 394.80 421.80 C394.33 430.80 392.43 461.57 391.00 470.00 C389.57 478.43 387.17 473.43 386.20 472.40 C385.23 471.37 386.45 468.10 385.20 463.80 C383.95 459.50 380.85 451.45 378.70 446.60 C376.55 441.75 374.80 438.47 372.30 434.70 C369.80 430.93 366.40 427.03 363.70 424.00 C361.00 420.97 358.08 419.50 356.10 416.50 C354.12 413.50 352.52 411.33 351.80 406.00 C351.08 400.67 352.27 390.83 351.80 384.50 C351.33 378.17 348.97 374.58 349.00 368.00 C349.03 361.42 350.45 349.77 352.00 345.00 C353.55 340.23 356.18 339.27 358.30 339.40 Z" fill="url(#lwall)" clip-path="url(#oc)"/>
<path d="M350.0 292.0 L357.5 296.0 L358.5 320.0 L358.3 339.4 L352.0 345.0 L345.0 352.3 L346.0 320.0 L348.0 299.9 Z" fill="url(#lstrip)" clip-path="url(#oc)"/>
<path d="M392.7 397.4 L393.8 403.9 L392.7 409.2 L393.8 416.0 L394.8 421.8 L391.0 424.0 L388.0 418.0 L389.0 405.0 Z" fill="#880090"/>
<path d="M358.30 339.40 C358.67 337.43 362.42 335.80 366.90 334.00 C371.38 332.20 378.93 330.40 385.20 328.60 C391.47 326.80 400.20 324.63 404.50 323.20 C408.80 321.77 407.77 321.73 411.00 320.00 C414.23 318.27 419.60 314.90 423.90 312.80 C428.20 310.70 432.32 309.20 436.80 307.40 C441.28 305.60 447.22 302.53 450.80 302.00 C454.38 301.47 456.15 302.22 458.30 304.20 C460.45 306.18 462.08 311.03 463.70 313.90 C465.32 316.77 466.22 319.48 468.00 321.40 C469.78 323.32 472.80 324.02 474.40 325.40 C476.00 326.78 477.15 327.37 477.60 329.70 C478.05 332.03 477.98 336.53 477.10 339.40 C476.22 342.27 474.37 344.93 472.30 346.90 C470.23 348.87 466.32 349.58 464.70 351.20 C463.08 352.82 463.05 354.27 462.60 356.60 C462.15 358.93 462.72 362.17 462.00 365.20 C461.28 368.23 461.07 371.77 458.30 374.80 C455.53 377.83 449.88 380.35 445.40 383.40 C440.92 386.45 434.63 390.23 431.40 393.10 C428.17 395.97 428.68 398.27 426.00 400.60 C423.32 402.93 419.23 404.40 415.30 407.10 C411.37 409.80 405.82 414.35 402.40 416.80 C398.98 419.25 396.23 421.93 394.80 421.80 C393.37 421.67 394.15 418.10 393.80 416.00 C393.45 413.90 392.70 411.22 392.70 409.20 C392.70 407.18 393.80 405.87 393.80 403.90 C393.80 401.93 394.13 401.53 392.70 397.40 C391.27 393.27 387.53 384.83 385.20 379.10 C382.87 373.37 380.85 367.30 378.70 363.00 C376.55 358.70 374.63 356.17 372.30 353.30 C369.97 350.43 367.03 348.12 364.70 345.80 C362.37 343.48 357.93 341.37 358.30 339.40 Z" fill="#fff"/>
<path d="M330.5 273 V358.5 L391.8 532 L518.7 447" fill="none" stroke="#262626" stroke-width="1"/>
<path d="M330.5 358.5 l-2.9 1.9" stroke="#262626" stroke-width="1"/>
<path d="M350.9 416.3 l-2.9 1.9" stroke="#262626" stroke-width="1"/>
<path d="M371.4 474.2 l-2.9 1.9" stroke="#262626" stroke-width="1"/>
<path d="M391.8 532 l-2.9 1.9" stroke="#262626" stroke-width="1"/>
<path d="M406.9 525.6 l1.2 3.3" stroke="#262626" stroke-width="1"/>
<path d="M459.6 489 l1.2 3.3" stroke="#262626" stroke-width="1"/>
<path d="M513.3 452.5 l1.2 3.3" stroke="#262626" stroke-width="1"/>
<path d="M330.5 273 l-2.9 -1.9" stroke="#262626" stroke-width="1"/>
<path d="M330.5 358.5 l-2.9 1.9" stroke="#262626" stroke-width="1"/>
<text x="320.5" y="274" text-anchor="middle" font-family="Liberation Sans" font-size="11.3" fill="#262626">50</text>
<text x="324" y="358" text-anchor="middle" font-family="Liberation Sans" font-size="11.3" fill="#262626">0</text>
<text x="313" y="379" text-anchor="middle" font-family="Liberation Sans" font-size="11.3" fill="#262626">300</text>
<text x="333" y="436" text-anchor="middle" font-family="Liberation Sans" font-size="11.3" fill="#262626">250</text>
<text x="354" y="493" text-anchor="middle" font-family="Liberation Sans" font-size="11.3" fill="#262626">200</text>
<text x="376" y="551" text-anchor="middle" font-family="Liberation Sans" font-size="11.3" fill="#262626">150</text>
<text x="419" y="545" text-anchor="middle" font-family="Liberation Sans" font-size="11.3" fill="#262626">150</text>
<text x="471.7" y="509.5" text-anchor="middle" font-family="Liberation Sans" font-size="11.3" fill="#262626">200</text>
<text x="524.6" y="473" text-anchor="middle" font-family="Liberation Sans" font-size="11.3" fill="#262626">250</text>
</svg>
</div>
</body></html>
